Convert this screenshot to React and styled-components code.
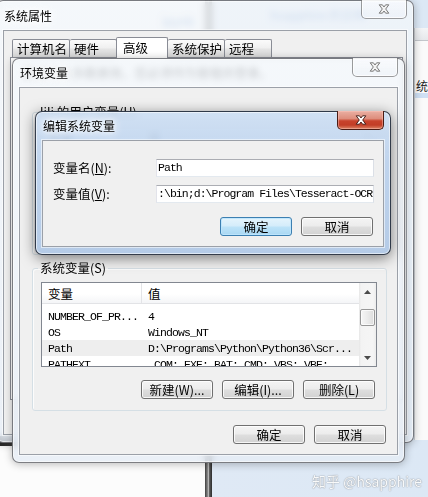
import React from 'react';
import styled, { createGlobalStyle } from 'styled-components';

const UI = `"Noto Sans CJK SC", "Noto Sans", sans-serif`;
const MONO = `"Liberation Mono", "Noto Sans CJK SC", monospace`;

const GlobalStyle = createGlobalStyle`
  html, body { margin: 0; padding: 0; }
  body { width: 428px; height: 497px; overflow: hidden; font-family: ${UI}; }
`;

const Desktop = styled.div`
  position: relative;
  width: 428px;
  height: 497px;
  overflow: hidden;
  background: linear-gradient(90deg, #fcfcfc 0, #fcfcfc 205px, #dfe9f5 212px, #dce8f5 100%);
`;

const Pole = styled.div`
  position: absolute;
  left: 205px;
  top: 0;
  bottom: 0;
  width: 7px;
  background: linear-gradient(90deg, #3e3e3e, #8d8d8d 40%, #b5b5b5 50%, #5a5a5a 65%, #2c2c2c);
`;

const Ledge = styled.div`
  position: absolute;
  left: 0;
  top: 436px;
  width: 16px;
  height: 10px;
  background: linear-gradient(90deg, #2a2a2a 0, #3a3a3a 70%, #9a9a9a 100%);
`;

const DeskText = styled.span`
  position: absolute;
  left: ${p => p.$x}px;
  top: ${p => p.$y}px;
  font: 12px/14px ${UI};
  color: #4c7cc4;
  white-space: nowrap;
`;

const BackWindow = styled.div`
  position: absolute;
  left: 414px;
  top: 28px;
  width: 30px;
  height: 412px;
  display: flex;
  flex-direction: column;
  background: #fafafa;
  border-left: 1px solid #cdd0d4;
`;

const BackBar = styled.div`
  height: 12px;
  background: linear-gradient(#f4f5f7, #e6e8eb);
  border-bottom: 1px solid #c3c6cb;
`;

const BackText = styled.div`
  margin-top: 38px;
  padding-left: 1px;
  font: 12px/14px ${UI};
  color: #222;
  white-space: nowrap;
`;

const BackHighlight = styled.div`
  height: 5px;
  background: #cfe0f4;
`;

const Win = styled.section`
  position: absolute;
  left: ${p => p.$x}px;
  top: ${p => p.$y}px;
  width: ${p => p.$w}px;
  height: ${p => p.$h}px;
  box-sizing: border-box;
  display: flex;
  flex-direction: column;
  padding: 0 6px 7px;
  border: 1px solid ${p => (p.$active ? 'rgba(25,32,45,0.85)' : 'rgba(45,45,50,0.6)')};
  border-radius: 7px;
  background: ${p =>
    p.$active
      ? 'linear-gradient(180deg, rgba(206,223,243,0.94) 0%, rgba(188,210,237,0.93) 35%, rgba(176,200,230,0.93) 100%)'
      : 'linear-gradient(180deg, rgba(242,246,250,0.8) 0%, rgba(229,236,245,0.8) 100%)'};
  backdrop-filter: blur(3px);
  box-shadow: inset 0 0 0 1px rgba(255, 255, 255, 0.55),
    ${p => (p.$active ? '0 3px 14px rgba(0,0,0,0.5)' : '0 1px 8px rgba(0,0,0,0.28)')};
`;

const TitleBar = styled.header`
  flex: none;
  display: flex;
  align-items: flex-start;
  height: ${p => p.$h || 28}px;
`;

const TitleText = styled.h1`
  margin: 0;
  align-self: center;
  padding-left: 1px;
  font: 400 12px/14px ${UI};
  color: #000;
  text-shadow: 0 0 4px #fff, 0 0 8px #fff, 0 0 12px rgba(255, 255, 255, 0.9);
`;

const CloseButton = styled.div`
  margin-left: auto;
  margin-top: -1px;
  width: ${p => (p.$active ? 47 : 46)}px;
  height: 19px;
  box-sizing: border-box;
  display: flex;
  align-items: center;
  justify-content: center;
  border: 1px solid ${p => (p.$active ? '#4a1c14' : 'rgba(0,0,0,0.38)')};
  border-top: none;
  border-radius: 0 0 5px 5px;
  background: ${p =>
    p.$active
      ? 'linear-gradient(180deg, #eab0a3 0%, #de8e7d 42%, #c8432c 55%, #c23d26 78%, #dc8566 100%)'
      : 'linear-gradient(180deg, rgba(255,255,255,0.55), rgba(236,241,247,0.6))'};
  box-shadow: inset 0 0 0 1px ${p => (p.$active ? 'rgba(255,200,190,0.45)' : 'rgba(255,255,255,0.75)')};
`;

function CloseGlyph({ active }) {
  return (
    <svg width="12" height="10" viewBox="0 0 12 10">
      <path
        d="M1.2 0.8 H4.4 L6 3 L7.6 0.8 H10.8 L7.7 5 L10.8 9.2 H7.6 L6 7 L4.4 9.2 H1.2 L4.3 5 Z"
        fill={active ? '#ffffff' : '#f2f2f2'}
        stroke={active ? '#3a140e' : '#6e6e6e'}
        strokeWidth="0.9"
        strokeLinejoin="round"
      />
    </svg>
  );
}

const Client = styled.div`
  flex: 1;
  min-height: 0;
  display: flex;
  flex-direction: column;
  background: #f0f0f0;
  border: 1px solid rgba(70, 80, 95, 0.5);
  box-shadow: 0 0 0 1px rgba(255, 255, 255, 0.55);
`;

const SheetClient = styled(Client)`
  padding: 6px 3px 34px 6px;
`;

const EnvClient = styled(Client)`
  padding: 17px 10px 10px 12px;
`;

const EditClient = styled(Client)`
  padding: 18px 9px 10px 10px;
`;

const TabStrip = styled.div`
  display: flex;
  align-items: flex-end;
  height: 20px;
  padding-left: 2px;
`;

const Tab = styled.div`
  position: relative;
  box-sizing: border-box;
  height: ${p => (p.$selected ? 21 : 18)}px;
  min-width: ${p => (p.$selected ? 52 : 47)}px;
  margin-left: ${p => (p.$selected ? -1 : 0)}px;
  margin-bottom: ${p => (p.$selected ? -1 : 0)}px;
  z-index: ${p => (p.$selected ? 1 : 0)};
  padding: ${p => (p.$selected ? '1px 2px 0 6px' : '0 2px 0 4px')};
  border: 1px solid #898c95;
  border-bottom: none;
  border-left-width: ${p => (p.$first || p.$selected ? 1 : 0)}px;
  border-radius: 2px 2px 0 0;
  background: ${p =>
    p.$selected ? '#ffffff' : 'linear-gradient(180deg, #fbfbfb 0%, #f0f0f0 45%, #e4e4e4 55%, #d9d9d9 100%)'};
  font: 12.5px/17px ${UI};
  color: #000;
  white-space: nowrap;
`;

const TabPage = styled.div`
  flex: 1;
  border: 1px solid #898c95;
  background: #ffffff;
  padding: 8px 11px;
`;

const Notice = styled.p`
  margin: 0;
  font: 12.5px/14px ${UI};
  color: #000;
  white-space: nowrap;
`;

const Group = styled.fieldset`
  margin: 0 0 ${p => p.$mb || 0}px;
  padding: 7px 9px 11px 8px;
  min-width: 0;
  border: 1px solid #d5dfe5;
  border-radius: 3px;
  box-shadow: inset 1px 1px 0 rgba(255, 255, 255, 0.8);
`;

const Legend = styled.legend`
  margin-left: -3px;
  padding: 0 2px;
  font: 12.5px/14px ${UI};
  color: #000;
  white-space: nowrap;
`;

const ListView = styled.div`
  height: 85px;
  box-sizing: border-box;
  display: flex;
  border: 1px solid #828790;
  background: #ffffff;
  overflow: hidden;
`;

const ListMain = styled.div`
  flex: 1;
  min-width: 0;
  display: flex;
  flex-direction: column;
  overflow: hidden;
`;

const ListHeader = styled.div`
  flex: none;
  height: 21px;
  box-sizing: border-box;
  display: flex;
  align-items: flex-end;
  background: linear-gradient(180deg, #ffffff 0%, #ffffff 55%, #f4f5f7 100%);
  border-bottom: 1px solid #e2e3e6;
`;

const HeaderCell = styled.div`
  box-sizing: border-box;
  width: ${p => (p.$w ? `${p.$w}px` : 'auto')};
  flex: ${p => (p.$w ? 'none' : 1)};
  height: 100%;
  display: flex;
  align-items: flex-end;
  padding: 0 0 1px 6px;
  border-left: ${p => (p.$divider ? '1px solid #e3e4e7' : 'none')};
  font: 12.5px/16px ${UI};
  color: #000;
`;

const ListBody = styled.div`
  padding-top: 4px;
`;

const ListRow = styled.div`
  display: flex;
  height: 16px;
  background: ${p => (p.$selected ? '#eeeeee' : 'transparent')};
`;

const Cell = styled.div`
  box-sizing: border-box;
  width: ${p => (p.$w ? `${p.$w}px` : 'auto')};
  flex: ${p => (p.$w ? 'none' : 1)};
  padding: 1px 0 0 ${p => (p.$w ? 6 : 7)}px;
  font: 11.5px/15px ${MONO};
  letter-spacing: -0.9px;
  color: #000;
  white-space: nowrap;
  overflow: hidden;
`;

const ScrollBar = styled.div`
  flex: none;
  width: 17px;
  display: flex;
  flex-direction: column;
  align-items: center;
  background: linear-gradient(90deg, #e6e6e6 0, #f3f3f3 2px, #f5f5f5 14px, #ececec 17px);
`;

const ScrollArrow = styled.div`
  flex: none;
  width: 17px;
  height: 17px;
  display: flex;
  align-items: center;
  justify-content: center;
`;

const ScrollTrack = styled.div`
  flex: 1;
  display: flex;
  flex-direction: column;
  align-items: center;
`;

const ScrollThumb = styled.div`
  margin-top: 9px;
  width: 15px;
  height: 17px;
  box-sizing: border-box;
  border: 1px solid #979797;
  border-radius: 2px;
  background: linear-gradient(90deg, #f6f6f6 0%, #ebebeb 50%, #dcdcdc 100%);
  box-shadow: inset 0 0 0 1px rgba(255, 255, 255, 0.7);
`;

function Arrow({ down }) {
  return (
    <svg width="7" height="4" viewBox="0 0 7 4">
      <path d={down ? 'M0 0 L7 0 L3.5 4 Z' : 'M0 4 L3.5 0 L7 4 Z'} fill="#4a4a4a" />
    </svg>
  );
}

const ButtonRow = styled.div`
  display: flex;
  justify-content: flex-end;
  gap: 9px;
  margin-top: ${p => p.$mt || 0}px;
  padding-right: ${p => p.$pr || 0}px;
`;

const Button = styled.button`
  width: 72px;
  height: 19px;
  box-sizing: border-box;
  padding: 0;
  border: 1px solid ${p => (p.$default ? '#3c7fb1' : '#707070')};
  border-radius: 3px;
  background: ${p =>
    p.$default
      ? 'linear-gradient(180deg, #e5f4fc 0%, #d4ecfa 48%, #bde3f8 52%, #a9d7f3 100%)'
      : 'linear-gradient(180deg, #f4f4f4 0%, #ececec 48%, #dedede 52%, #d2d2d2 100%)'};
  box-shadow: inset 0 0 0 1px ${p => (p.$default ? 'rgba(190,230,253,0.9)' : 'rgba(255,255,255,0.8)')};
  font: 12.5px/17px ${UI};
  color: #000;
  white-space: nowrap;
`;

const FieldGrid = styled.div`
  display: grid;
  grid-template-columns: 103px 1fr;
  row-gap: 8px;
  align-items: center;
`;

const FieldLabel = styled.label`
  font: 12.5px/14px ${UI};
  color: #000;
  white-space: nowrap;
`;

const Key = styled.span`
  text-decoration: underline;
`;

const Field = styled.div`
  height: 18px;
  box-sizing: border-box;
  padding: 0 0 0 1px;
  border: 1px solid;
  border-color: #abadb3 #dbdfe6 #e3e9ef #e2e3ea;
  background: #ffffff;
  font: 11.5px/16px ${MONO};
  letter-spacing: -0.95px;
  color: #000;
  white-space: nowrap;
  overflow: hidden;
`;

const Watermark = styled.div`
  position: absolute;
  left: 312px;
  top: 472px;
  font: 14px/18px ${UI};
  color: rgba(255, 255, 255, 0.95);
  text-shadow: 0 0 1px rgba(0, 0, 0, 0.45), 0 0 2px rgba(0, 0, 0, 0.2);
  white-space: nowrap;
`;

const tabs = ['计算机名', '硬件', '高级', '系统保护', '远程'];

const userRows = [
  ['Path', 'C:\\Users\\lili\\AppData\\Local\\...'],
  ['TEMP', '%USERPROFILE%\\AppData\\Local\\Temp'],
  ['TMP', '%USERPROFILE%\\AppData\\Local\\Temp'],
];

const systemRows = [
  ['NUMBER_OF_PR...', '4'],
  ['OS', 'Windows_NT'],
  ['Path', 'D:\\Programs\\Python\\Python36\\Scr...', true],
  ['PATHEXT', '.COM;.EXE;.BAT;.CMD;.VBS;.VBE;...'],
  ['PROCESSOR_A...', 'AMD64'],
];

function VarList({ rows }) {
  return (
    <ListView>
      <ListMain>
        <ListHeader>
          <HeaderCell $w={99}>变量</HeaderCell>
          <HeaderCell $divider>值</HeaderCell>
        </ListHeader>
        <ListBody>
          {rows.map(([name, value, sel]) => (
            <ListRow key={name} $selected={sel}>
              <Cell $w={99}>{name}</Cell>
              <Cell>{value}</Cell>
            </ListRow>
          ))}
        </ListBody>
      </ListMain>
      <ScrollBar>
        <ScrollArrow>
          <Arrow />
        </ScrollArrow>
        <ScrollTrack>
          <ScrollThumb />
        </ScrollTrack>
        <ScrollArrow>
          <Arrow down />
        </ScrollArrow>
      </ScrollBar>
    </ListView>
  );
}

export default function App() {
  return (
    <>
      <GlobalStyle />
      <Desktop>
        <Pole />
        <Ledge />
        <DeskText $x={270} $y={8}>hsapphire 的文档</DeskText>
        <DeskText $x={162} $y={14}>ipynb</DeskText>
        <BackWindow>
          <BackBar />
          <BackText>统有</BackText>
          <BackHighlight />
        </BackWindow>

        <Win $x={-4} $y={0} $w={418} $h={443}>
          <TitleBar $h={29}>
            <TitleText>系统属性</TitleText>
            <CloseButton>
              <CloseGlyph />
            </CloseButton>
          </TitleBar>
          <SheetClient>
            <TabStrip>
              {tabs.map((t, i) => (
                <Tab key={t} $first={i === 0} $selected={t === '高级'}>
                  {t}
                </Tab>
              ))}
            </TabStrip>
            <TabPage>
              <Notice>要进行大多数更改，您必须作为管理员登录。</Notice>
            </TabPage>
          </SheetClient>
        </Win>

        <Win $x={12} $y={58} $w={393} $h={405}>
          <TitleBar>
            <TitleText>环境变量</TitleText>
            <CloseButton>
              <CloseGlyph />
            </CloseButton>
          </TitleBar>
          <EnvClient>
            <Group $mb={6}>
              <Legend>lili 的用户变量(U)</Legend>
              <VarList rows={userRows} />
              <ButtonRow $mt={13} $pr={2}>
                <Button>新建(N)...</Button>
                <Button>编辑(E)...</Button>
                <Button>删除(D)</Button>
              </ButtonRow>
            </Group>
            <Group>
              <Legend>系统变量(S)</Legend>
              <VarList rows={systemRows} />
              <ButtonRow $mt={13} $pr={2}>
                <Button>新建(W)...</Button>
                <Button>编辑(I)...</Button>
                <Button>删除(L)</Button>
              </ButtonRow>
            </Group>
            <ButtonRow $mt={14} $pr={1}>
              <Button>确定</Button>
              <Button>取消</Button>
            </ButtonRow>
          </EnvClient>
        </Win>

        <Win $active $x={35} $y={111} $w={356} $h={144}>
          <TitleBar>
            <TitleText>编辑系统变量</TitleText>
            <CloseButton $active>
              <CloseGlyph active />
            </CloseButton>
          </TitleBar>
          <EditClient>
            <FieldGrid>
              <FieldLabel>
                变量名(<Key>N</Key>):
              </FieldLabel>
              <Field>Path</Field>
              <FieldLabel>
                变量值(<Key>V</Key>):
              </FieldLabel>
              <Field>:\bin;d:\Program Files\Tesseract-OCR</Field>
            </FieldGrid>
            <ButtonRow $mt={14} $pr={1}>
              <Button $default>确定</Button>
              <Button>取消</Button>
            </ButtonRow>
          </EditClient>
        </Win>

        <Watermark>知乎 @hsapphire</Watermark>
      </Desktop>
    </>
  );
}
